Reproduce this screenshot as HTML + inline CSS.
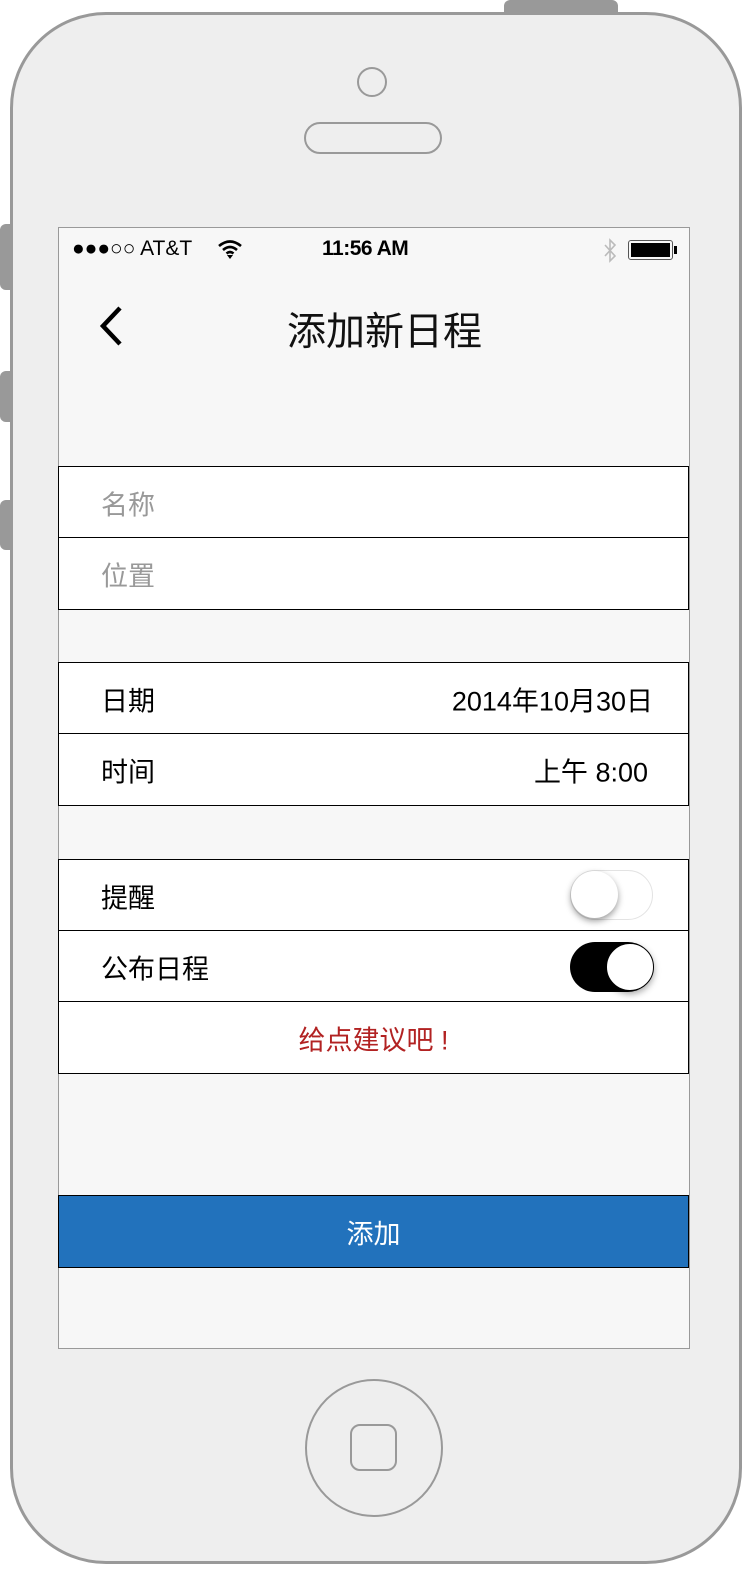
<!DOCTYPE html>
<html><head><meta charset="utf-8"><style>
body{margin:0;width:752px;height:1588px;background:#fff;position:relative;overflow:hidden;font-family:"Liberation Sans","Noto Sans CJK SC",sans-serif}
.a{position:absolute}
.row{position:absolute;left:58px;width:631px;background:#fff;border:1px solid #000;box-sizing:border-box;height:73px;font-size:27px}
.row span{position:absolute;top:50%;transform:translateY(-50%)}
</style></head><body>
<div class="a" style="left:504px;top:0;width:114px;height:20px;background:#999;border-radius:6px 6px 0 0"></div>
<div class="a" style="left:0;top:224px;width:16px;height:66px;background:#999;border-radius:6px"></div>
<div class="a" style="left:0;top:371px;width:16px;height:51px;background:#999;border-radius:6px"></div>
<div class="a" style="left:0;top:500px;width:16px;height:50px;background:#999;border-radius:6px"></div>
<div class="a" style="left:10px;top:12px;width:732px;height:1552px;box-sizing:border-box;border:3px solid #999;border-radius:96px;background:#eee"></div>
<div class="a" style="left:357px;top:67px;width:30px;height:30px;box-sizing:border-box;border:2px solid #999;border-radius:50%"></div>
<div class="a" style="left:304px;top:122px;width:138px;height:32px;box-sizing:border-box;border:2px solid #999;border-radius:16px"></div>
<div class="a" style="left:305px;top:1379px;width:138px;height:138px;box-sizing:border-box;border:2px solid #999;border-radius:50%"></div>
<div class="a" style="left:350px;top:1424px;width:47px;height:47px;box-sizing:border-box;border:2px solid #999;border-radius:10px"></div>
<div class="a" style="left:58px;top:227px;width:632px;height:1122px;box-sizing:border-box;border:1px solid #999;background:#f7f7f7"></div>
<div class="a" style="left:72px;top:237px;font-size:21px;color:#000">●●●○○ AT&amp;T</div>
<svg class="a" style="left:217px;top:238px" width="26" height="22" viewBox="0 0 26 22"><path d="M2 8Q13-1 24 8M6 12Q13 6 20 12M9.5 15.5Q13 12.5 16.5 15.5" stroke="#000" stroke-width="2.6" fill="none"/><path d="M10 17L13 21L16 17Z" fill="#000"/></svg>
<div class="a" style="left:322px;top:237px;font-size:21px;font-weight:bold;letter-spacing:-0.5px">11:56 AM</div>
<svg class="a" style="left:601px;top:237px" width="18" height="28" viewBox="0 0 18 28"><path d="M4 8L14 19L9 24V3L14 8L4 19" stroke="#bbb" stroke-width="1.6" fill="none"/></svg>
<div class="a" style="left:628px;top:240px;width:45px;height:20px;box-sizing:border-box;border:1px solid #555;border-radius:3px;padding:2px"><div style="background:#000;width:100%;height:100%"></div></div>
<div class="a" style="left:674px;top:246px;width:3px;height:8px;background:#000"></div>
<svg class="a" style="left:96px;top:304px" width="30" height="44" viewBox="0 0 30 44"><path d="M24 4L7 22L24 40" stroke="#000" stroke-width="4.5" fill="none"/></svg>
<div class="a" style="left:287px;top:301px;font-size:39px;color:#111">添加新日程</div>
<div class="row" style="top:466px"><span style="left:42px;color:#999">名称</span></div>
<div class="row" style="top:537px"><span style="left:42px;color:#999">位置</span></div>
<div class="row" style="top:662px"><span style="left:42px">日期</span><span style="right:35px">2014年10月30日</span></div>
<div class="row" style="top:733px"><span style="left:42px">时间</span><span style="right:40px">上午 8:00</span></div>
<div class="row" style="top:859px"><span style="left:42px">提醒</span>
<div class="a" style="left:511px;top:10px;width:83px;height:50px;box-sizing:border-box;border:1px solid #e3e3e3;border-radius:25px"></div>
<div class="a" style="left:512px;top:11px;width:47px;height:47px;border-radius:50%;background:#fff;box-shadow:0 3px 7px rgba(0,0,0,.4)"></div></div>
<div class="row" style="top:930px"><span style="left:42px">公布日程</span>
<div class="a" style="left:511px;top:11px;width:83px;height:50px;background:#000;border-radius:25px"></div>
<div class="a" style="left:547px;top:12px;width:46px;height:46px;border-radius:50%;background:#fff;box-shadow:0 3px 7px rgba(0,0,0,.35);border:1px solid #000"></div></div>
<div class="row" style="top:1001px"><span style="left:0;right:0;text-align:center;color:#b22222">给点建议吧 !</span></div>
<div class="row" style="top:1195px;background:#2272bc"><span style="left:0;right:0;text-align:center;color:#fff">添加</span></div>
</body></html>
